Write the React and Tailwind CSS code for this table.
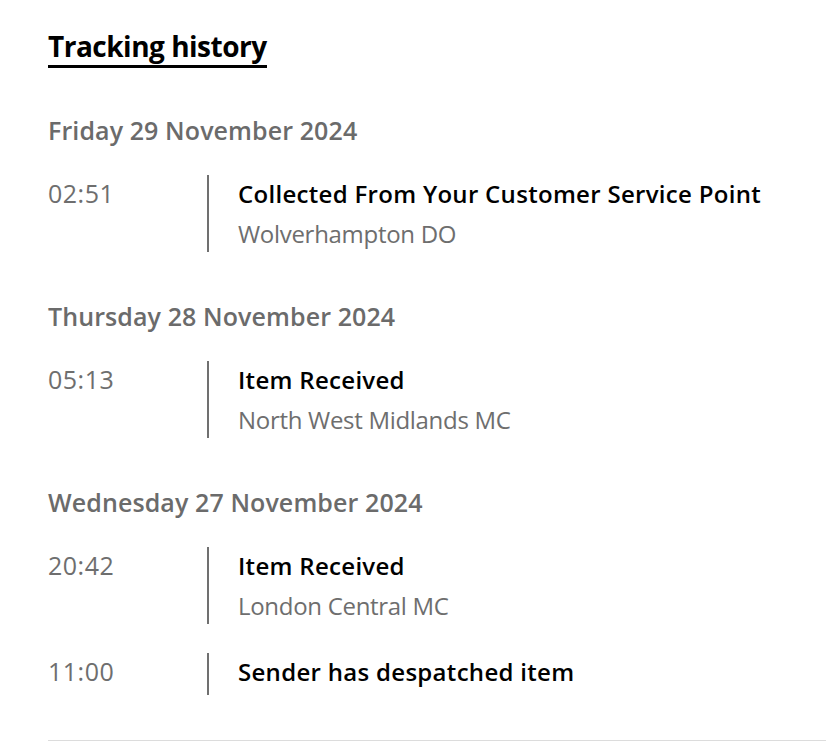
const history = [
  {
    date: 'Friday 29 November 2024',
    events: [
      { time: '02:51', title: 'Collected From Your Customer Service Point', place: 'Wolverhampton DO' },
    ],
  },
  {
    date: 'Thursday 28 November 2024',
    events: [
      { time: '05:13', title: 'Item Received', place: 'North West Midlands MC' },
    ],
  },
  {
    date: 'Wednesday 27 November 2024',
    events: [
      { time: '20:42', title: 'Item Received', place: 'London Central MC' },
      { time: '11:00', title: 'Sender has despatched item' },
    ],
  },
];

const Event = ({ event }) => (
  <div className="flex">
    <div className="w-[159px] shrink-0 text-[25px] leading-[37px] tracking-[0.5px] text-[#6e6e6e]">{event.time}</div>
    <div className={`border-l-2 border-[#707070] pl-[29px] ${event.place ? '' : 'pb-[5px]'}`}>
      <p className="text-[24px] font-semibold leading-[37px] tracking-[0.3px] text-black">{event.title}</p>
      {event.place && (
        <p className="mt-[4px] text-[24px] leading-[36px] tracking-[-0.3px] text-[#6e6e6e]">{event.place}</p>
      )}
    </div>
  </div>
);

export default function App() {
  return (
    <div className="min-h-screen bg-white pl-[48px] pt-[28px]" style={{ fontFamily: '"Open Sans", sans-serif' }}>
      <h2 className="inline-block border-b-[3px] border-black pb-[1px] text-[28px] font-bold leading-[36px] tracking-[-0.5px] text-black">
        Tracking history
      </h2>

      <div className="mt-[44px] flex flex-col gap-[46px]">
        {history.map((day) => (
          <section key={day.date}>
            <h3 className="text-[25px] font-semibold leading-[36px] tracking-[0.1px] text-[#6b6b6b]">{day.date}</h3>
            <div className="mt-[27px] flex flex-col gap-[29px]">
              {day.events.map((ev) => (
                <Event key={ev.time} event={ev} />
              ))}
            </div>
          </section>
        ))}
      </div>

      <div className="mt-[45px] border-t border-[#dcdcdc]" />
    </div>
  );
}
